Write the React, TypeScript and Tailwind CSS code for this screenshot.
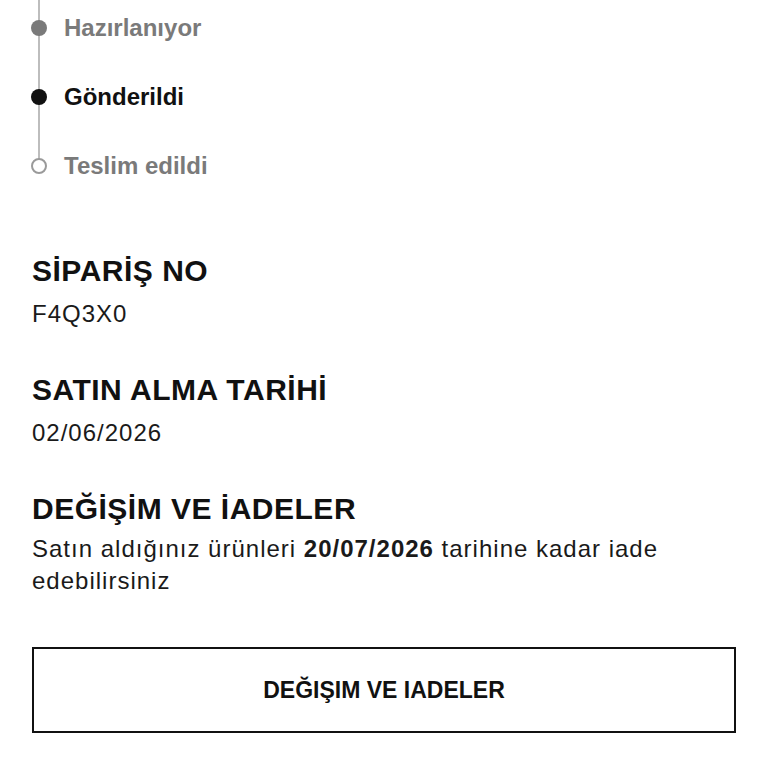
const steps = [
  { label: "Hazırlanıyor", state: "done" },
  { label: "Gönderildi", state: "current" },
  { label: "Teslim edildi", state: "todo" },
];

const Dot = ({ state }: { state: string }) => {
  if (state === "done") return <span className="block h-4 w-4 rounded-full bg-[#7a7a7a]" />;
  if (state === "current") return <span className="block h-4 w-4 rounded-full bg-[#111]" />;
  return <span className="block h-4 w-4 rounded-full border-2 border-[#9a9a9a] bg-white" />;
};

const Section = ({ title, tight, children }: { title: string; tight?: boolean; children: React.ReactNode }) => (
  <div className="flex flex-col">
    <h2 className="text-[30px] leading-[36px] font-semibold tracking-[0.5px] text-[#111]">{title}</h2>
    <div className={(tight ? "mt-[6px] " : "mt-[9px] ") + "text-[24px] leading-[32px] tracking-[1px] text-[#1a1a1a]"}>
      {children}
    </div>
  </div>
);

export default function App() {
  return (
    <div className="min-h-[768px] w-full overflow-hidden bg-white px-8 font-['Liberation_Sans',Arial,sans-serif]">
      <div className="relative mt-[-7px]">
        <div className="absolute left-[6px] top-0 h-[171px] w-[2px] bg-[#bdbdbd]" />
        {steps.map((s) => (
          <div key={s.label} className="relative flex h-[69px] items-center">
            <span className="-ml-[1px]">
              <Dot state={s.state} />
            </span>
            <span
              className={
                "ml-[17px] text-[24px] font-semibold " +
                (s.state === "current" ? "text-[#111]" : "text-[#7a7a7a]")
              }
            >
              {s.label}
            </span>
          </div>
        ))}
      </div>

      <div className="mt-[53px] flex flex-col gap-[42px]">
        <Section title="SİPARİŞ NO">F4Q3X0</Section>
        <Section title="SATIN ALMA TARİHİ">02/06/2026</Section>
        <Section title="DEĞİŞİM VE İADELER" tight>
          Satın aldığınız ürünleri <b className="font-bold">20/07/2026</b> tarihine kadar iade edebilirsiniz
        </Section>
      </div>

      <button className="mt-[50px] flex h-[86px] w-full items-center justify-center border-2 border-[#111] bg-white text-[23px] font-bold text-[#111]">
        DEĞIŞIM VE IADELER
      </button>
    </div>
  );
}
